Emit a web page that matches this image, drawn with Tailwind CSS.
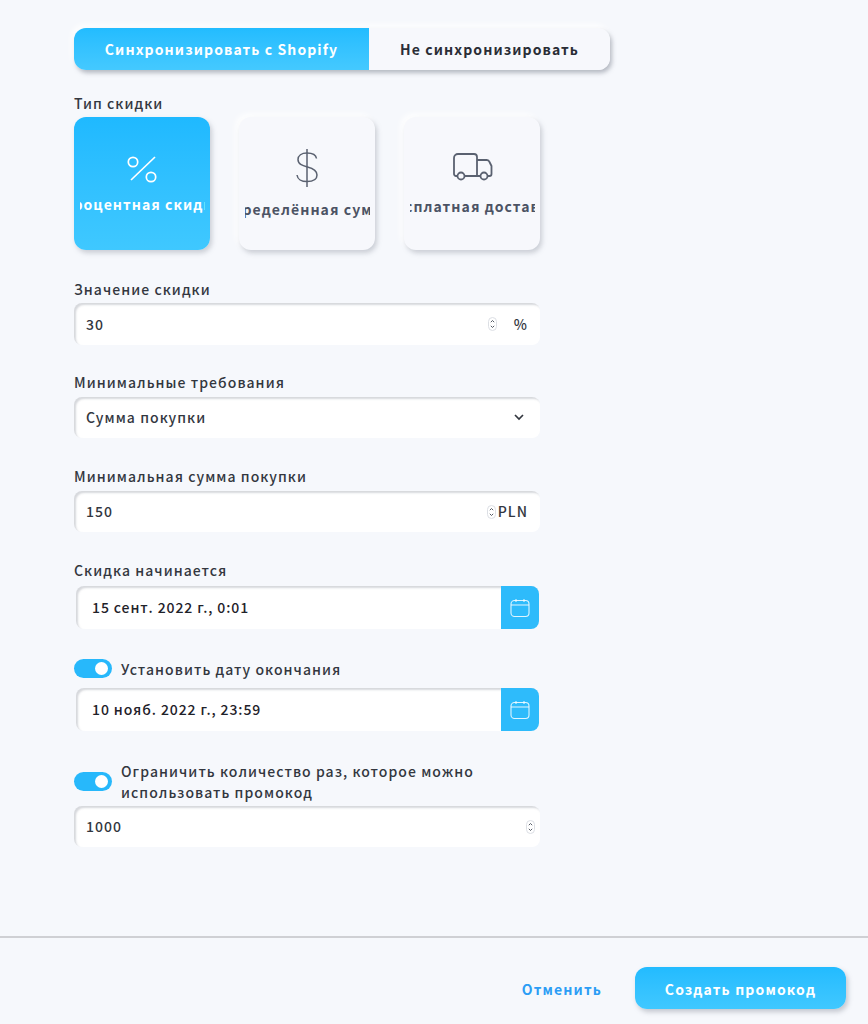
<!DOCTYPE html>
<html lang="ru">
  <head>
    <meta charset="UTF-8" />
    <meta name="viewport" content="width=device-width, initial-scale=1.0" />
    <title>Создать промокод</title>
    <script src="https://cdn.jsdelivr.net/npm/@tailwindcss/browser@4"></script>
  </head>
  <body class="h-[1024px] overflow-hidden bg-[#f6f8fc] text-[#33373f] font-['Noto_Sans_CJK_JP','Noto_Sans',sans-serif] text-[14px] font-medium tracking-[1.05px]">
    <main class="h-[936px] pl-[74px] pt-[28px]">
      <!-- sync switch -->
      <div class="flex w-[536px] h-[42px] rounded-[12px] overflow-hidden shadow-[2px_3px_4px_rgba(120,125,140,0.5),-2px_-3px_6px_#ffffff] font-bold tracking-[1.1px]">
        <div class="w-[295px] pt-[1px] flex items-center justify-center text-white bg-gradient-to-b from-[#22bcff] to-[#44c9ff]">Синхронизировать с Shopify</div>
        <div class="flex-1 pt-[1px] flex items-center justify-center bg-[#f7f8fc] text-[#2a2d36]">Не синхронизировать</div>
      </div>

      <p class="mt-[22px] h-[25px] leading-[22px]">Тип скидки</p>

      <!-- discount type -->
      <div class="flex gap-[29px] h-[133px]">
        <div class="w-[136px] rounded-[12px] bg-gradient-to-b from-[#1fb9ff] to-[#3fc8ff] text-white shadow-[2px_3px_5px_rgba(120,125,140,0.35)] flex flex-col items-center">
          <svg class="mt-[33px]" width="36" height="36" viewBox="0 0 36 36" fill="none" stroke="#fff" stroke-width="1.7"><circle cx="9" cy="12" r="4.700"/><circle cx="27" cy="27" r="4.700"/><path d="M31 7 7 30"/></svg>
          <div class="mt-[8px] w-[125px] overflow-hidden flex justify-center font-bold whitespace-nowrap leading-[20px]"><span>Процентная скидка</span></div>
        </div>
        <div class="w-[136px] rounded-[12px] bg-[#f7f8fc] shadow-[2px_3px_5px_rgba(120,125,140,0.35),-3px_-3px_6px_#ffffff] text-[#4c5364] flex flex-col items-center">
          <svg class="mt-[30px]" width="26" height="42" viewBox="0 0 26 42" fill="none" stroke="#5a6170" stroke-width="1.500"><path d="M13 2v38"/><path d="M22.500 11.500c-.5-3.500-4-5.500-9.500-5.500-5.500 0-9 2.500-9 6.500 0 4.500 4 6 9.500 7.500 6 1.500 9.500 3.500 9.500 8 0 4.500-4 6.500-10 6.500-5.500 0-9.500-2.500-10-6.500"/></svg>
          <div class="mt-[10px] w-[125px] overflow-hidden flex justify-center font-bold whitespace-nowrap leading-[20px]"><span>Определённая сумма</span></div>
        </div>
        <div class="w-[136px] rounded-[12px] bg-[#f7f8fc] shadow-[2px_3px_5px_rgba(120,125,140,0.35),-3px_-3px_6px_#ffffff] text-[#4c5364] flex flex-col items-center">
          <svg class="mt-[36px] ml-[2px]" width="40" height="28" viewBox="0 0 40 28" fill="none" stroke="#5a6170" stroke-width="1.800" stroke-linejoin="round"><path d="M4.500 23H3a2 2 0 0 1-2-2V5a4 4 0 0 1 4-4h16a3 3 0 0 1 3 3v19"/><path d="M11.500 23h16M24 7h9.500a3 3 0 0 1 3 2l2 4v8a2 2 0 0 1-2 2h-2"/><circle cx="8" cy="23" r="3.500"/><circle cx="31" cy="23" r="3.500"/></svg>
          <div class="mt-[15px] w-[125px] overflow-hidden flex justify-center font-bold whitespace-nowrap leading-[20px]"><span>Бесплатная доставка</span></div>
        </div>
      </div>

      <!-- value -->
      <label class="block mt-[28px] h-[25px] leading-[22px]">Значение скидки</label>
      <div class="w-[466px] h-[42px] flex items-center pl-[12px] pr-[12px] bg-white rounded-[8px] shadow-[inset_2px_2px_2px_rgba(120,125,140,0.3)]">
        <span class="flex-1">30</span>
        <svg class="mr-[17px]" width="9" height="14" viewBox="0 0 9 14" fill="none" stroke="#555b66"><rect x="0.500" y="0.500" width="8" height="13" rx="4" stroke="#dcdfe4"/><path d="M2.800 5.200 4.500 3.500l1.700 1.700M2.800 8.800l1.700 1.700 1.700-1.700"/></svg>
        <span>%</span>
      </div>

      <label class="block mt-[26px] h-[26px] leading-[22px]">Минимальные требования</label>
      <div class="w-[466px] h-[41px] flex items-center pl-[12px] pr-[16px] bg-white rounded-[8px] shadow-[inset_2px_2px_2px_rgba(120,125,140,0.3)]">
        <span class="flex-1">Сумма покупки</span>
        <svg width="10" height="7" viewBox="0 0 10 7" fill="none" stroke="#33373f" stroke-width="1.700"><path d="m1 1 4 4 4-4"/></svg>
      </div>

      <label class="block mt-[27px] h-[26px] leading-[22px]">Минимальная сумма покупки</label>
      <div class="w-[466px] h-[41px] flex items-center pl-[12px] pr-[12px] bg-white rounded-[8px] shadow-[inset_2px_2px_2px_rgba(120,125,140,0.3)]">
        <span class="flex-1">150</span>
        <svg class="mr-[2px]" width="9" height="14" viewBox="0 0 9 14" fill="none" stroke="#555b66"><rect x="0.500" y="0.500" width="8" height="13" rx="4" stroke="#dcdfe4"/><path d="M2.800 5.200 4.500 3.500l1.700 1.700M2.800 8.800l1.700 1.700 1.700-1.700"/></svg>
        <span>PLN</span>
      </div>

      <label class="block mt-[27px] h-[27px] leading-[22px]">Скидка начинается</label>
      <div class="ml-[2px] w-[463px] h-[43px] flex bg-white rounded-[8px] overflow-hidden shadow-[inset_2px_2px_2px_rgba(120,125,140,0.3)]">
        <span class="flex-1 pl-[16px] flex items-center text-[#1f222a] tracking-[0.9px]">15 сент. 2022 г., 0:01</span>
        <span class="w-[38px] flex items-center justify-center bg-[#2ebbfb]">
          <svg width="20" height="20" viewBox="0 0 20 20" fill="none" stroke="#fff" stroke-opacity="0.85" stroke-width="1.100"><rect x="1" y="2.500" width="18" height="16" rx="3.500"/><path d="M1 7h18M6 1v3M14 1v3"/></svg>
        </span>
      </div>

      <div class="mt-[30px] h-[29px] flex items-start gap-[9px]">
        <span class="w-[38px] h-[19px] rounded-full bg-[#27b8fb] flex items-center justify-end pr-[4px]"><span class="size-[13px] rounded-full bg-white"></span></span>
        <span class="leading-[20px]">Установить дату окончания</span>
      </div>
      <div class="ml-[2px] w-[463px] h-[43px] flex bg-white rounded-[8px] overflow-hidden shadow-[inset_2px_2px_2px_rgba(120,125,140,0.3)]">
        <span class="flex-1 pl-[16px] flex items-center text-[#1f222a] tracking-[0.9px]">10 нояб. 2022 г., 23:59</span>
        <span class="w-[38px] flex items-center justify-center bg-[#2ebbfb]">
          <svg width="20" height="20" viewBox="0 0 20 20" fill="none" stroke="#fff" stroke-opacity="0.85" stroke-width="1.100"><rect x="1" y="2.500" width="18" height="16" rx="3.500"/><path d="M1 7h18M6 1v3M14 1v3"/></svg>
        </span>
      </div>

      <div class="mt-[28px] mb-[2px] h-[45px] flex items-center gap-[9px]">
        <span class="w-[38px] h-[19px] rounded-full bg-[#27b8fb] flex items-center justify-end pr-[4px] shrink-0"><span class="size-[13px] rounded-full bg-white"></span></span>
        <span class="w-[380px] leading-[21px]">Ограничить количество раз, которое можно использовать промокод</span>
      </div>
      <div class="w-[466px] h-[41px] flex items-center pl-[12px] pr-[5px] bg-white rounded-[8px] shadow-[inset_2px_2px_2px_rgba(120,125,140,0.3)]">
        <span class="flex-1">1000</span>
        <svg width="9" height="14" viewBox="0 0 9 14" fill="none" stroke="#555b66"><rect x="0.500" y="0.500" width="8" height="13" rx="4" stroke="#dcdfe4"/><path d="M2.800 5.200 4.500 3.500l1.700 1.700M2.800 8.800l1.700 1.700 1.700-1.700"/></svg>
      </div>
    </main>

    <!-- footer -->
    <footer class="h-[88px] border-t-2 border-[#cfd0d4] flex items-start justify-end pt-[29px] pr-[22px] font-bold tracking-[1.15px]">
      <button class="mt-[12px] mr-[33px] text-[#2c9df5]">Отменить</button>
      <button class="w-[211px] h-[42px] pt-[2px] rounded-[12px] text-white bg-gradient-to-b from-[#22bbff] to-[#40c8ff] shadow-[2px_3px_5px_rgba(120,125,140,0.4)]">Создать промокод</button>
    </footer>
  </body>
</html>
